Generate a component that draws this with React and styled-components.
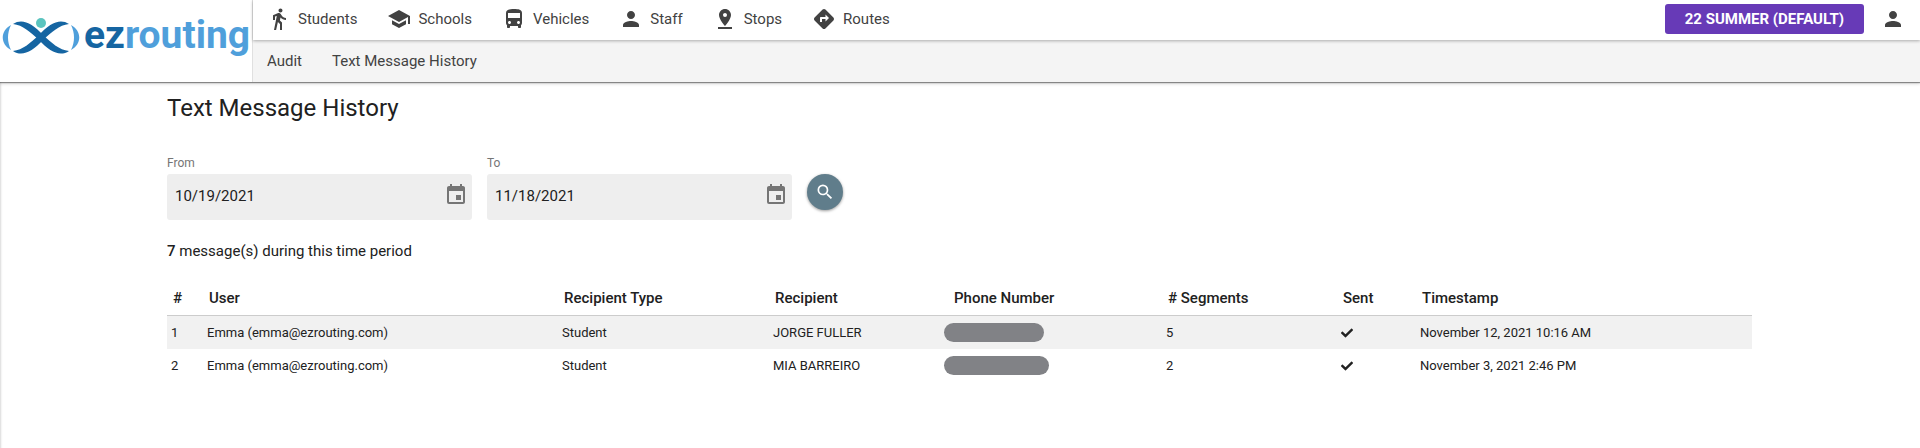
import React from "react";
import styled, { createGlobalStyle } from "styled-components";
import {
  MdDirectionsWalk,
  MdSchool,
  MdDirectionsBus,
  MdPerson,
  MdPinDrop,
  MdDirections,
  MdEvent,
  MdSearch,
} from "react-icons/md";
import { FaCheck } from "react-icons/fa";

const GlobalStyle = createGlobalStyle`
  *, *::before, *::after { box-sizing: border-box; }
  html, body { margin: 0; }
  body {
    font-family: Roboto, "Liberation Sans", sans-serif;
    font-size: 15px;
    line-height: 20px;
    color: #212121;
    background: #fff;
  }
  button, input { font: inherit; color: inherit; }
`;

const Page = styled.div`
  min-height: 100vh;
  display: flex;
  flex-direction: column;
`;

const Header = styled.header`
  position: relative;
  display: flex;
  height: 82px;
  box-shadow: 0 1px 1px rgba(0, 0, 0, 0.4), 0 2px 3px rgba(0, 0, 0, 0.15);
`;

const Brand = styled.a`
  flex: none;
  width: 253px;
  height: 82px;
  padding: 0 2px 12px;
  display: flex;
  align-items: center;
  gap: 4px;
  text-decoration: none;
  background: #fff;
  border-right: 1px solid #e0e0e0;
`;

const BrandMark = styled.svg`
  flex: none;
  width: 78px;
  height: 38px;
`;

const BrandName = styled.span`
  font-size: 39px;
  line-height: 48px;
  font-weight: 700;
  color: #4f9fdb;
`;

const BrandStart = styled.span`
  color: #1565a2;
`;

const Bars = styled.div`
  flex: 1;
  min-width: 0;
  display: flex;
  flex-direction: column;
`;

const TopBar = styled.div`
  position: relative;
  display: flex;
  align-items: center;
  justify-content: space-between;
  height: 40px;
  padding: 0 15px 2px 14px;
  background: #fff;
  box-shadow: 0 1px 3px rgba(0, 0, 0, 0.3);
`;

const SubBar = styled.nav`
  flex: 1;
  display: flex;
  align-items: center;
  gap: 30px;
  padding: 0 14px;
  background: #f4f4f4;
`;

const MainNav = styled.nav`
  display: flex;
  align-items: center;
  gap: 30px;
`;

const NavLink = styled.a`
  display: flex;
  align-items: center;
  gap: 7px;
  color: #424242;
  text-decoration: none;
  white-space: nowrap;

  svg {
    flex: none;
  }
`;

const Account = styled.div`
  display: flex;
  align-items: center;
  gap: 17px;
`;

const SeasonButton = styled.button`
  height: 30px;
  padding: 0 20px;
  border: 0;
  border-radius: 3px;
  background: #673ab7;
  color: #fff;
  font-weight: 700;
`;

const IconButton = styled.button`
  display: flex;
  padding: 0;
  border: 0;
  background: none;
  color: ${(p) => p.$color};
`;

const Main = styled.main`
  flex: 1;
  padding: 14px 168px 0 167px;
  box-shadow: inset 3px 0 2px -2px rgba(0, 0, 0, 0.15);
`;

const Title = styled.h1`
  margin: 0 0 36px;
  font-size: 24px;
  line-height: 24px;
  font-weight: 400;
`;

const SearchForm = styled.form`
  display: flex;
  align-items: flex-start;
  gap: 15px;
`;

const Field = styled.div`
  width: 305px;
`;

const FieldLabel = styled.label`
  display: block;
  height: 18px;
  font-size: 12px;
  line-height: 15px;
  color: #757575;
`;

const DateBox = styled.div`
  display: flex;
  align-items: center;
  height: 46px;
  padding: 0 4px 4px 8px;
  border-radius: 3px;
  background: #eee;
`;

const DateInput = styled.input`
  flex: 1;
  min-width: 0;
  padding: 2px 0 0;
  border: 0;
  outline: 0;
  background: transparent;
`;

const SearchButton = styled.button`
  display: flex;
  align-items: center;
  justify-content: center;
  width: 36px;
  height: 36px;
  margin-top: 18px;
  padding: 0;
  border: 0;
  border-radius: 50%;
  background: #607d8b;
  color: #fff;
  box-shadow: 0 1px 3px rgba(0, 0, 0, 0.4);
`;

const Summary = styled.p`
  margin: 21px 0 22px;

  strong {
    font-weight: 500;
  }
`;

const Table = styled.table`
  width: 100%;
  table-layout: fixed;
  border-collapse: separate;
  border-spacing: 0;
  text-align: left;
`;

const Col = styled.col`
  width: ${(p) => p.$share}%;
`;

const HeadCell = styled.th`
  height: 33px;
  padding: 0 6px 2px;
  border-bottom: 1px solid #ccc;
  font-weight: 500;
`;

const Row = styled.tr`
  &:nth-child(odd) {
    background: #f1f1f1;
  }
`;

const Cell = styled.td`
  height: 33px;
  padding: 0 4px;
  font-size: 13px;

  svg {
    display: block;
  }
`;

const PhoneCell = styled(Cell)`
  padding: 0;
`;

const HiddenNumber = styled.div`
  width: ${(p) => p.$width}px;
  height: 19px;
  margin-left: -4px;
  border-radius: 10px;
  background: #818286;
`;

const NAV = [
  ["Students", MdDirectionsWalk],
  ["Schools", MdSchool],
  ["Vehicles", MdDirectionsBus],
  ["Staff", MdPerson],
  ["Stops", MdPinDrop],
  ["Routes", MdDirections],
];

const COLUMNS = [
  ["#", 36],
  ["User", 355],
  ["Recipient Type", 211],
  ["Recipient", 179],
  ["Phone Number", 214],
  ["# Segments", 175],
  ["Sent", 79],
  ["Timestamp", 336],
];
const COLUMN_TOTAL = COLUMNS.reduce((sum, [, size]) => sum + size, 0);

const MESSAGES = [
  {
    user: "Emma (emma@ezrouting.com)",
    type: "Student",
    recipient: "JORGE FULLER",
    hidden: 100,
    segments: 5,
    time: "November 12, 2021 10:16 AM",
  },
  {
    user: "Emma (emma@ezrouting.com)",
    type: "Student",
    recipient: "MIA BARREIRO",
    hidden: 105,
    segments: 2,
    time: "November 3, 2021 2:46 PM",
  },
];

const RIBBON =
  "M11 8C20 2 30 7 41 19C50 27 57 34 67 35C58 41 48 36 37 24C28 16 21 9 11 8Z";

function Logo() {
  return (
    <BrandMark viewBox="0 0 78 38" aria-hidden="true">
      <path d="M9 9C-2 15 -2 28 9 34C5 26 5 17 9 9Z" fill="#4f9fdb" />
      <path d="M69 9C80 15 80 28 69 34C73 26 73 17 69 9Z" fill="#4f9fdb" />
      <path d={RIBBON} fill="#1565a2" />
      <path d={RIBBON} fill="#1565a2" transform="matrix(-1 0 0 1 78 0)" />
      <circle cx="39" cy="7" r="5" fill="#5bc4bf" />
    </BrandMark>
  );
}

function DateField({ id, label, value }) {
  return (
    <Field>
      <FieldLabel htmlFor={id}>{label}</FieldLabel>
      <DateBox>
        <DateInput id={id} type="text" defaultValue={value} />
        <IconButton type="button" $color="#757575" aria-label={`Choose ${label} date`}>
          <MdEvent size={24} />
        </IconButton>
      </DateBox>
    </Field>
  );
}

export default function App() {
  return (
    <Page>
      <GlobalStyle />
      <Header>
        <Brand href="#home">
          <Logo />
          <BrandName>
            <BrandStart>ez</BrandStart>routing
          </BrandName>
        </Brand>
        <Bars>
          <TopBar>
            <MainNav>
              {NAV.map(([label, Icon]) => (
                <NavLink key={label} href={`#${label.toLowerCase()}`}>
                  <Icon size={24} />
                  {label}
                </NavLink>
              ))}
            </MainNav>
            <Account>
              <SeasonButton type="button">22 SUMMER (DEFAULT)</SeasonButton>
              <IconButton type="button" $color="#424242" aria-label="Account">
                <MdPerson size={24} />
              </IconButton>
            </Account>
          </TopBar>
          <SubBar>
            <NavLink href="#audit">Audit</NavLink>
            <NavLink href="#history">Text Message History</NavLink>
          </SubBar>
        </Bars>
      </Header>
      <Main>
        <Title>Text Message History</Title>
        <SearchForm onSubmit={(e) => e.preventDefault()}>
          <DateField id="from" label="From" value="10/19/2021" />
          <DateField id="to" label="To" value="11/18/2021" />
          <SearchButton type="submit" aria-label="Search">
            <MdSearch size={20} />
          </SearchButton>
        </SearchForm>
        <Summary>
          <strong>7</strong> message(s) during this time period
        </Summary>
        <Table>
          <colgroup>
            {COLUMNS.map(([name, size]) => (
              <Col key={name} $share={(size / COLUMN_TOTAL) * 100} />
            ))}
          </colgroup>
          <thead>
            <tr>
              {COLUMNS.map(([name]) => (
                <HeadCell key={name} scope="col">
                  {name}
                </HeadCell>
              ))}
            </tr>
          </thead>
          <tbody>
            {MESSAGES.map((m, i) => (
              <Row key={m.time}>
                <Cell>{i + 1}</Cell>
                <Cell>{m.user}</Cell>
                <Cell>{m.type}</Cell>
                <Cell>{m.recipient}</Cell>
                <PhoneCell>
                  <HiddenNumber $width={m.hidden} />
                </PhoneCell>
                <Cell>{m.segments}</Cell>
                <Cell>
                  <FaCheck size={12} role="img" aria-label="Sent" />
                </Cell>
                <Cell>{m.time}</Cell>
              </Row>
            ))}
          </tbody>
        </Table>
      </Main>
    </Page>
  );
}
